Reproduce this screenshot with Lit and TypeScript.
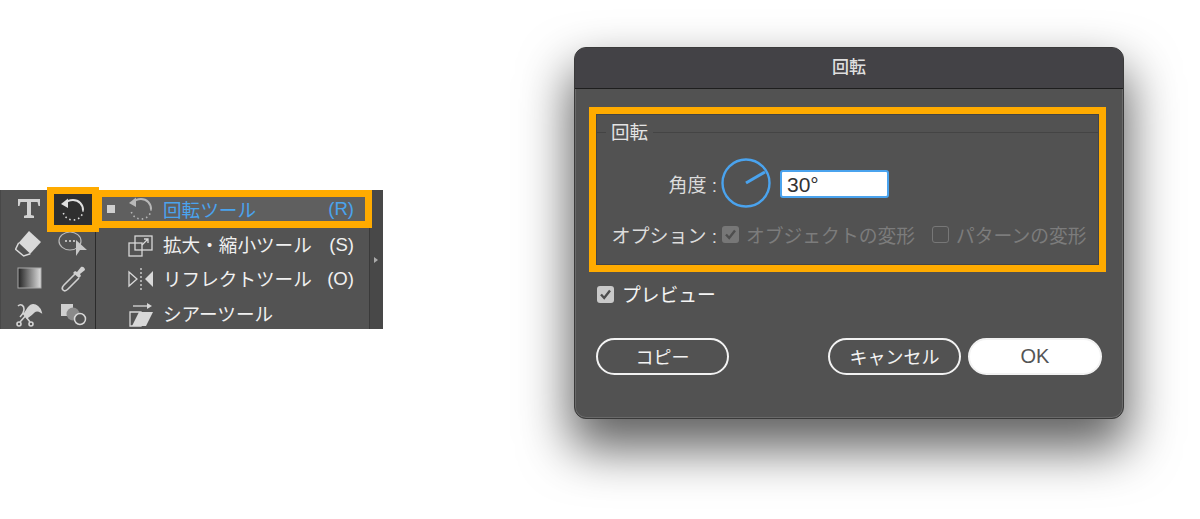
import { LitElement, html, css, svg } from "lit";
import { customElement } from "lit/decorators.js";

const rotateIcon = (color: string) => svg`
  <path d="M6 7.500C8 5 11 4 14 4c6 0 10 4.500 10 10" fill="none" stroke=${color} stroke-width="2"/>
  <path d="M24 14c0 6-4.500 10-10 10S4.500 20 4 15" fill="none" stroke=${color} stroke-width="1.600" stroke-dasharray="1.500 3"/>
  <polygon points="2,8 9,2.500 9,12" fill=${color}/>`;

@customElement("app-root")
export class AppRoot extends LitElement {
  static styles = css`
    :host {
      display: block;
      height: 519px;
      overflow: hidden;
      background: #fff;
      font-family: "Liberation Sans", "Noto Sans CJK JP", sans-serif;
    }
    * { box-sizing: border-box; }
    .page { display: flex; align-items: flex-start; }

    .panel {
      display: flex;
      width: 383px;
      height: 139px;
      margin-top: 190px;
      background: #535353;
      border-left: 1px solid #484848;
    }
    .tools {
      flex: none;
      display: grid;
      grid-template-columns: 38px 38px;
      grid-auto-rows: 30px;
      column-gap: 6px;
      row-gap: 5px;
      align-content: start;
      width: 95px;
      height: 100%;
      padding: 4px 0 0 9px;
      border-right: 1px solid #2b2b2b;
    }
    .tool { display: flex; align-items: center; justify-content: center; }
    .tool.active {
      height: 31px;
      background: #2f2f2f;
      box-shadow: 0 0 0 7px #ffab00;
      position: relative;
    }
    .menu {
      flex: none;
      display: grid;
      grid-template-rows: 38px 33px 35px 35px;
      width: 270px;
      margin-left: 3px;
      color: #f0f0f0;
      font-size: 18.600px;
    }
    .row {
      display: flex;
      align-items: center;
      padding: 0 18px 0 28px;
      white-space: nowrap;
    }
    .row.current {
      width: 273px;
      padding: 0 11px 0 5px;
      position: relative;
      z-index: 1;
      border: 7px solid #ffab00;
      border-left-width: 3px;
      background: #5f5f5f;
      color: #4aa3ee;
    }
    .marker { width: 8px; height: 8px; margin-right: 12px; background: #cfcfcf; }
    .row svg { flex: none; margin-right: 8px; }
    .name { padding-bottom: 2px; }
    .key { margin-left: auto; }
    .strip {
      flex: 1;
      display: flex;
      align-items: center;
      padding-left: 4px;
      background: #484848;
      border-left: 1px solid #3a3a3a;
    }
    .arrow {
      width: 0;
      height: 0;
      border-left: 4px solid #aaa;
      border-top: 3px solid transparent;
      border-bottom: 3px solid transparent;
    }

    .dialog {
      flex: none;
      width: 550px;
      height: 372px;
      margin: 47px 0 0 191px;
      background: #525252;
      border: 1px solid #3a3a3a;
      border-radius: 12px;
      box-shadow: inset 0 0 0 1px #6a6a6a, 0 26px 50px 4px rgba(0, 0, 0, .62);
      color: #f0f0f0;
      font-size: 18px;
      overflow: hidden;
    }
    .title {
      height: 41px;
      line-height: 39px;
      text-align: center;
      font-size: 17px;
      font-weight: 500;
      color: #dedede;
      background: #434246;
      border-bottom: 1px solid #1e1e1e;
    }
    .group {
      width: 517px;
      height: 165px;
      margin: 18px 0 0 14px;
      border: 7px solid #ffab00;
      box-shadow: inset 0 0 0 1px #444;
    }
    .legend {
      display: flex;
      align-items: center;
      gap: 5px;
      height: 38px;
      margin-bottom: 5px;
      padding-bottom: 1px;
      color: #e4e4e4;
      font-size: 18.500px;
    }
    .legend .name { padding-bottom: 4px; }
    .legend::before { content: ""; width: 9px; height: 1px; margin-left: 1px; background: #444; }
    .legend::after { content: ""; flex: 1; height: 1px; background: #444; }
    .line { display: flex; align-items: center; }
    .angle { height: 52px; }
    .options { height: 50px; }
    .label {
      flex: none;
      width: 121px;
      text-align: right;
      font-size: 19px;
      color: #dcdcdc;
      white-space: nowrap;
    }
    .dial { flex: none; margin: 0 9px 0 4px; }
    .field {
      width: 109px;
      height: 28px;
      margin-top: 2px;
      padding-left: 5px;
      line-height: 26px;
      font-size: 21px;
      color: #333;
      background: #fff;
      border: 2px solid #4aa3ee;
      border-radius: 3px;
    }
    .check {
      flex: none;
      display: flex;
      align-items: center;
      justify-content: center;
      width: 17px;
      height: 17px;
      border-radius: 3px;
    }
    .check.off { background: #777; }
    .check.empty { border: 1.500px solid #777; }
    .check.on { background: #c9c9c9; }
    .muted { color: #7c7c7c; font-size: 18.800px; white-space: nowrap; }
    .options .check.off { margin: 0 7px 0 5px; }
    .options .check.empty { margin: 0 7px 0 17px; }
    .preview {
      height: 44px;
      margin-left: 22px;
      gap: 8px;
      font-size: 18.800px;
      color: #f4f4f4;
    }
    .buttons { display: flex; margin: 22px 0 0 21px; }
    .btn {
      display: flex;
      align-items: center;
      justify-content: center;
      width: 133px;
      height: 37px;
      padding-bottom: 2px;
      border: 2px solid #f2f2f2;
      border-radius: 19px;
      color: #f2f2f2;
    }
    .copy { margin-right: 99px; }
    .cancel { margin-right: 7px; }
    .ok { width: 134px; padding-bottom: 0; background: #fff; color: #555; font-size: 20px; }
  `;

  render() {
    return html`
      <div class="page">
        <div class="panel">
          <div class="tools">
            <div class="tool">
              <svg width="24" height="24" viewBox="0 0 24 24" fill="#d2d2d2">
                <path d="M1 2h22v7h-1.500l-1-4H14v13l3 .8V21H7v-2.200l3-.8V5H3.500l-1 4H1z"/>
              </svg>
            </div>
            <div class="tool active">
              <svg width="28" height="28" viewBox="0 0 28 28">${rotateIcon("#e0e0e0")}</svg>
            </div>
            <div class="tool">
              <svg width="28" height="28" viewBox="0 0 28 28">
                <polygon points="14,1 26,12 15.300,23.700 3.700,12.700" fill="#dadada"/>
                <path d="M3.700 12.700L.6 19.300l8.100 6.700 6.600-2.300" fill="none" stroke="#dadada" stroke-width="1.500"/>
              </svg>
            </div>
            <div class="tool">
              <svg width="30" height="28" viewBox="0 0 30 28">
                <ellipse cx="12" cy="11" rx="11" ry="9" fill="none" stroke="#bbb" stroke-width="1.200"/>
                <circle cx="8" cy="11" r="1" fill="#ddd"/><circle cx="12" cy="11" r="1" fill="#ddd"/><circle cx="16" cy="11" r="1" fill="#ddd"/>
                <polygon points="18,10 29,20 22,20 18,26" fill="#c8c8c8"/>
              </svg>
            </div>
            <div class="tool">
              <svg width="26" height="24" viewBox="0 0 26 24">
                <defs>
                  <linearGradient id="grad"><stop offset="0" stop-color="#222"/><stop offset="1" stop-color="#ddd"/></linearGradient>
                </defs>
                <rect x="2" y="1" width="23" height="20" fill="url(#grad)" stroke="#aaa"/>
              </svg>
            </div>
            <div class="tool">
              <svg width="28" height="28" viewBox="0 0 28 28">
                <path d="M16 9L5 20c-2 2-2 4-1 5s3 1 5-1l11-11" fill="none" stroke="#d0d0d0" stroke-width="1.600"/>
                <path d="M14 8l2-2 2 1 4-5c2-1 4 1 4 3l-5 4 1 2-2 2z" fill="#d0d0d0"/>
              </svg>
            </div>
            <div class="tool">
              <svg width="28" height="28" viewBox="0 0 28 28" fill="none" stroke="#d4d4d4" stroke-width="1.600">
                <path d="M3 6c3-3 6 0 6 3s-2 6-4 8"/>
                <path d="M9 14c3-3 4-8 8-9s8 3 9 7c-3-2-5-2-7 0s-5 5-8 6" fill="#d4d4d4"/>
                <path d="M8 13l7 9M13 13l-8 9"/>
                <circle cx="4" cy="24" r="2"/><circle cx="16" cy="24" r="2"/>
              </svg>
            </div>
            <div class="tool">
              <svg width="28" height="26" viewBox="0 0 28 26">
                <rect x="2" y="3" width="12" height="12" fill="#cfcfcf"/>
                <circle cx="14" cy="13" r="6.500" fill="#8a8a8a"/>
                <circle cx="21" cy="18" r="5.500" fill="#535353" stroke="#d8d8d8" stroke-width="1.500"/>
              </svg>
            </div>
          </div>
          <div class="menu">
            <div class="row current">
              <span class="marker"></span>
              <svg width="28" height="28" viewBox="0 0 28 28">${rotateIcon("#b8b8b8")}</svg>
              <span class="name">回転ツール</span>
              <span class="key">(R)</span>
            </div>
            <div class="row">
              <svg width="28" height="26" viewBox="0 0 28 26" fill="none" stroke="#d8d8d8" stroke-width="1.300">
                <rect x="2" y="11" width="13" height="13"/>
                <rect x="8" y="4" width="17" height="14"/>
                <path d="M15 13l6-6M17 7h4v4"/>
              </svg>
              <span class="name">拡大・縮小ツール</span>
              <span class="key">(S)</span>
            </div>
            <div class="row">
              <svg width="28" height="24" viewBox="0 0 28 24">
                <polygon points="2,5 10,12 2,19" fill="none" stroke="#d8d8d8" stroke-width="1.300"/>
                <path d="M14 1v22" stroke="#d8d8d8" stroke-width="1.300" stroke-dasharray="2 2"/>
                <polygon points="26,4 18,12 26,20" fill="#d8d8d8"/>
              </svg>
              <span class="name">リフレクトツール</span>
              <span class="key">(O)</span>
            </div>
            <div class="row">
              <svg width="28" height="28" viewBox="0 0 28 28">
                <path d="M3 12h11v14H3z" fill="none" stroke="#d8d8d8" stroke-width="1.300"/>
                <polygon points="12,12 26,12 19,26 5,26" fill="#d8d8d8"/>
                <path d="M6 6h14" stroke="#d8d8d8" stroke-width="1.300"/>
                <polygon points="20,3 25,6 20,9" fill="#d8d8d8"/>
              </svg>
              <span class="name">シアーツール</span>
            </div>
          </div>
          <div class="strip"><span class="arrow"></span></div>
        </div>

        <div class="dialog">
          <div class="title">回転</div>
          <div class="group">
            <div class="legend"><span class="name">回転</span></div>
            <div class="line angle">
              <span class="label">角度 :</span>
              <svg class="dial" width="50" height="50" viewBox="0 0 50 50" fill="none" stroke="#4aa3ee">
                <circle cx="25" cy="25" r="23.500" stroke-width="2.400"/>
                <path d="M25 25L44 14" stroke-width="3"/>
              </svg>
              <span class="field">30°</span>
            </div>
            <div class="line options">
              <span class="label">オプション :</span>
              <span class="check off">
                <svg width="13" height="13" viewBox="0 0 13 13" fill="none" stroke="#4e4e4e" stroke-width="2.400"><path d="M2 6.500l3.200 3.500L11 2.500"/></svg>
              </span>
              <span class="muted">オブジェクトの変形</span>
              <span class="check empty"></span>
              <span class="muted">パターンの変形</span>
            </div>
          </div>
          <div class="line preview">
            <span class="check on">
              <svg width="13" height="13" viewBox="0 0 13 13" fill="none" stroke="#4e4e4e" stroke-width="2.400"><path d="M2 6.500l3.200 3.500L11 2.500"/></svg>
            </span>
            <span class="name">プレビュー</span>
          </div>
          <div class="buttons">
            <div class="btn copy">コピー</div>
            <div class="btn cancel">キャンセル</div>
            <div class="btn ok">OK</div>
          </div>
        </div>
      </div>
    `;
  }
}
